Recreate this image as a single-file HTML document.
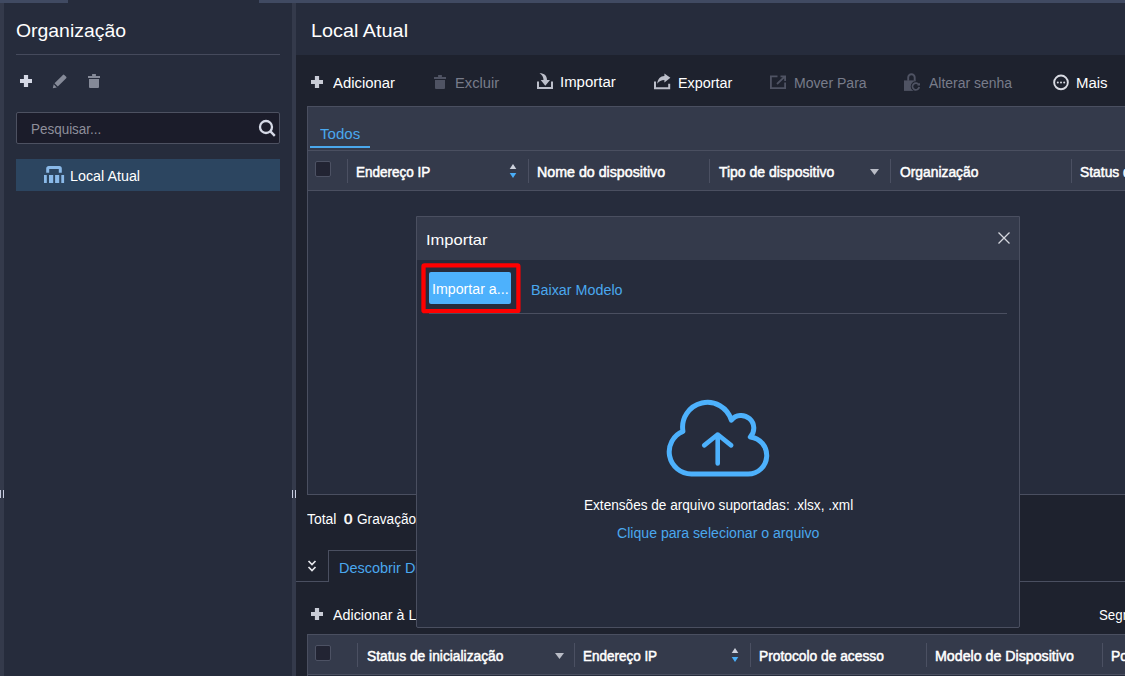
<!DOCTYPE html>
<html lang="pt-BR">
<head>
<meta charset="utf-8">
<title>Importar</title>
<style>
*{box-sizing:border-box;margin:0;padding:0}
html,body{width:1125px;height:676px;overflow:hidden;background:#262c3c}
body{font-family:"Liberation Sans",sans-serif;color:#fff;position:relative;font-size:14px}
.abs{position:absolute}
.t{position:absolute;white-space:nowrap;line-height:1;transform-origin:0 0}
.b{-webkit-text-stroke:0.5px currentColor}
svg{position:absolute;overflow:visible}
.sep{position:absolute;width:1px;height:24px;background:#4b5062}
.cb{position:absolute;width:16px;height:16px;background:#222433;border:1px solid #4d5264;border-radius:2px}
</style>
</head>
<body>

<!-- top strip / left strip -->
<div class="abs" style="left:0;top:0;width:68px;height:3px;background:#404a62"></div>
<div class="abs" style="left:259px;top:0;width:866px;height:3px;background:#404a62"></div>
<div class="abs" style="left:0;top:3px;width:4px;height:673px;background:#343a4b"></div>

<!-- ============ SIDEBAR ============ -->
<div class="abs" style="left:16px;top:54px;width:264px;height:1px;background:#454a5c"></div>

<!-- sidebar icons -->
<svg style="left:20px;top:75px" width="12" height="12" viewBox="0 0 12 12"><path d="M3.900 0h4.200v3.900H12v4.200H8.100V12H3.900V8.100H0V3.900h3.900z" fill="#d5d9e6"/></svg>
<svg style="left:53px;top:74px" width="14" height="14" viewBox="0 0 14 14"><path d="M1.500 9.300L9.900 0.900a1 1 0 0 1 1.400 0L13.200 2.800a1 1 0 0 1 0 1.400L4.800 12.600Z M0.700 10.300L3.800 13.400L-0.200 14.300Z" fill="#858a98"/></svg>
<svg style="left:88px;top:74px" width="12" height="14" viewBox="0 0 12 14"><path d="M4.100 0h3.800v2H12v2.100H0V2h4.100z M1 4.900h10V13a1 1 0 0 1-1 1H2a1 1 0 0 1-1-1z" fill="#858a98"/></svg>

<!-- search -->
<div class="abs" style="left:16px;top:112px;width:264px;height:32px;background:#1b1c2a;border:1px solid #4d5161;border-radius:2px"></div>
<svg style="left:258px;top:119px" width="18" height="18" viewBox="0 0 18 18"><circle cx="8" cy="8" r="6" fill="none" stroke="#d5d9e6" stroke-width="2.300"/><path d="M12.200 12.200l4.600 4.600" stroke="#d5d9e6" stroke-width="2.400"/></svg>

<!-- tree selected -->
<div class="abs" style="left:16px;top:159px;width:264px;height:32px;background:#2c4560"></div>
<svg style="left:44px;top:166px" width="20" height="17" viewBox="0 0 20 17"><path d="M3.700 6.700V2.600a1 1 0 0 1 1-1h10.600a1 1 0 0 1 1 1V6.700" fill="none" stroke="#8ab9e8" stroke-width="3"/><path d="M0 9h2.800v8H0z M5 9h4.200v8H5z M11.100 9h4.100v8h-4.100z M17.300 9h2.800v8h-2.800z" fill="#8ab9e8"/></svg>

<!-- splitter -->
<div class="abs" style="left:292px;top:3px;width:4px;height:673px;background:#343a4b"></div>
<div class="abs" style="left:0px;top:490px;width:1px;height:8px;background:#c8cde0"></div>
<div class="abs" style="left:3px;top:490px;width:1px;height:8px;background:#c8cde0"></div>
<div class="abs" style="left:292px;top:490px;width:1px;height:8px;background:#c8cde0"></div>
<div class="abs" style="left:295px;top:490px;width:1px;height:8px;background:#c8cde0"></div>

<!-- ============ MAIN ============ -->
<div class="abs" style="left:296px;top:55px;width:829px;height:621px;background:#1e222e"></div>

<!-- toolbar icons -->
<svg style="left:311px;top:76px" width="12" height="12" viewBox="0 0 12 12"><path d="M3.900 0h4.200v3.900H12v4.200H8.100V12H3.900V8.100H0V3.900h3.900z" fill="#c9ccd6"/></svg>
<svg style="left:434px;top:75px" width="12" height="14" viewBox="0 0 12 14"><path d="M4.100 0h3.800v2H12v2.100H0V2h4.100z M1 4.900h10V13a1 1 0 0 1-1 1H2a1 1 0 0 1-1-1z" fill="#4f5363"/></svg>
<svg style="left:537px;top:73px" width="16" height="16" viewBox="0 0 16 16"><path d="M1 8.500V15H15V8.500" fill="none" stroke="#bcbfca" stroke-width="2"/><path d="M2.500 0.300C7.500 0.300 10 2.800 10 7.100H13L8.300 12.800 3.700 7.100H6.500C6.500 4 5 1.800 2.500 0.300Z" fill="#bcbfca"/></svg>
<svg style="left:654px;top:74px" width="17" height="16" viewBox="0 0 17 16"><path d="M1 7.400V14.300H15.200V9.800" fill="none" stroke="#bcbfca" stroke-width="2"/><path d="M16.400 3.800L10.400 -0.500V2C6.500 2.200 3.500 4.800 3.300 9.800 5 7.300 7.300 6.200 10.400 6.100V8.400Z" fill="#bcbfca"/></svg>
<svg style="left:770px;top:75px" width="16" height="14" viewBox="0 0 16 14"><path d="M7.500 1.300H0.900V13.100H15.100V7.500" fill="none" stroke="#4f5363" stroke-width="1.800"/><path d="M10.500 1.300H15.100V6 M15 1.400L7 9" fill="none" stroke="#4f5363" stroke-width="1.800"/></svg>
<svg style="left:904px;top:73px" width="17" height="18" viewBox="0 0 17 18"><path d="M4.200 7.800V4.500a3.250 3.250 0 0 1 6.500 0V7.800" fill="none" stroke="#4f5363" stroke-width="1.900"/><path d="M0 7.400h11.800v10.500H0z" fill="#4f5363"/><circle cx="11.800" cy="13.400" r="5.100" fill="#1e222e"/><path d="M14.900 12A3.400 3.400 0 1 0 15.200 14" fill="none" stroke="#4f5363" stroke-width="1.700"/><path d="M13.100 12.600h2.900v-2.900z" fill="#4f5363"/></svg>
<svg style="left:1053px;top:74px" width="16" height="16" viewBox="0 0 16 16"><circle cx="8" cy="8.400" r="6.850" fill="none" stroke="#d9dbe3" stroke-width="1.900"/><circle cx="4.800" cy="8.400" r="1" fill="#d9dbe3"/><circle cx="8" cy="8.400" r="1" fill="#d9dbe3"/><circle cx="11.200" cy="8.400" r="1" fill="#d9dbe3"/></svg>

<!-- table panel -->
<div class="abs" style="left:307px;top:106px;width:830px;height:389px;background:#262c3c;border:1px solid #4a4f60"></div>
<div class="abs" style="left:308px;top:107px;width:817px;height:83px;background:#343a4b"></div>
<div class="abs" style="left:308px;top:150px;width:817px;height:1px;background:#4a4f60"></div>
<div class="abs" style="left:308px;top:190px;width:817px;height:1px;background:#4a4f60"></div>
<div class="abs" style="left:310px;top:146px;width:60px;height:2px;background:#4aa8ee"></div>

<div class="cb" style="left:315px;top:161px"></div>
<div class="sep" style="left:347px;top:159px"></div>
<svg style="left:509px;top:164px" width="8" height="14" viewBox="0 0 8 14"><path d="M4 0L7.300 5H0.700z" fill="#cdd1dc"/><path d="M4 14L7.300 9H0.700z" fill="#4aaef8"/></svg>
<div class="sep" style="left:528px;top:159px"></div>
<div class="sep" style="left:709px;top:159px"></div>
<svg style="left:870px;top:169px" width="9" height="6" viewBox="0 0 9 6"><path d="M0 0h9L4.500 6z" fill="#b9bcc6"/></svg>
<div class="sep" style="left:890px;top:159px"></div>
<div class="sep" style="left:1071px;top:159px"></div>

<!-- discover tabs -->
<div class="abs" style="left:296px;top:581px;width:33px;height:1px;background:#4a4f60"></div>
<div class="abs" style="left:490px;top:581px;width:635px;height:1px;background:#4a4f60"></div>
<div class="abs" style="left:328px;top:550px;width:163px;height:32px;border:1px solid #4a4f60;border-bottom:none"></div>
<svg style="left:308px;top:560px" width="8" height="12" viewBox="0 0 8 12"><path d="M0.500 1l3.500 3.500L7.500 1 M0.500 7l3.500 3.500L7.500 7" fill="none" stroke="#e6e7ec" stroke-width="1.700"/></svg>

<svg style="left:311px;top:608px" width="12" height="12" viewBox="0 0 12 12"><path d="M3.900 0h4.200v3.900H12v4.200H8.100V12H3.900V8.100H0V3.900h3.900z" fill="#c9ccd6"/></svg>

<!-- lower table header -->
<div class="abs" style="left:307px;top:634px;width:830px;height:50px;background:#343a4b;border:1px solid #4a4f60"></div>
<div class="abs" style="left:308px;top:674px;width:817px;height:1px;background:#4a4f60"></div>
<div class="abs" style="left:308px;top:675px;width:817px;height:1px;background:#262c3c"></div>
<div class="cb" style="left:315px;top:645px"></div>
<div class="sep" style="left:357px;top:643px"></div>
<svg style="left:555px;top:653px" width="9" height="6" viewBox="0 0 9 6"><path d="M0 0h9L4.500 6z" fill="#b9bcc6"/></svg>
<div class="sep" style="left:574px;top:643px"></div>
<svg style="left:731px;top:648px" width="8" height="14" viewBox="0 0 8 14"><path d="M4 0L7.300 5H0.700z" fill="#cdd1dc"/><path d="M4 14L7.300 9H0.700z" fill="#4aaef8"/></svg>
<div class="sep" style="left:750px;top:643px"></div>
<div class="sep" style="left:926px;top:643px"></div>
<div class="sep" style="left:1102px;top:643px"></div>

<div class="t" style="left:15.58px;top:21px;font-size:19px;color:#ffffff;transform:scaleX(1.0208);">Organização</div>
<div class="t" style="left:30.64px;top:122px;font-size:14px;color:#8e8f9b;transform:scaleX(0.9606);">Pesquisar...</div>
<div class="t" style="left:69.58px;top:169px;font-size:14px;color:#ffffff;transform:scaleX(1.0224);">Local Atual</div>
<div class="t" style="left:310.66px;top:21px;font-size:19px;color:#ffffff;transform:scaleX(1.0440);">Local Atual</div>
<div class="t" style="left:333.20px;top:76px;font-size:14px;color:#ffffff;transform:scaleX(1.0621);">Adicionar</div>
<div class="t" style="left:455.35px;top:76px;font-size:14px;color:#787c8a;transform:scaleX(1.0512);">Excluir</div>
<div class="t" style="left:559.63px;top:75px;font-size:14px;color:#ffffff;transform:scaleX(1.0686);">Importar</div>
<div class="t" style="left:677.77px;top:76px;font-size:14px;color:#ffffff;transform:scaleX(1.0269);">Exportar</div>
<div class="t" style="left:793.80px;top:76px;font-size:14px;color:#787c8a;transform:scaleX(1.0042);">Mover Para</div>
<div class="t" style="left:928.50px;top:76px;font-size:14px;color:#787c8a;transform:scaleX(0.9964);">Alterar senha</div>
<div class="t" style="left:1076.43px;top:76px;font-size:14px;color:#ffffff;transform:scaleX(1.0679);">Mais</div>
<div class="t" style="left:320.20px;top:126px;font-size:15px;color:#4aa8ee;transform:scaleX(1.0050);">Todos</div>
<div class="t b" style="left:356.14px;top:165px;font-size:14px;color:#ffffff;transform:scaleX(0.9645);">Endereço IP</div>
<div class="t b" style="left:537.18px;top:165px;font-size:14px;color:#ffffff;transform:scaleX(1.0160);">Nome do dispositivo</div>
<div class="t b" style="left:718.90px;top:165px;font-size:14px;color:#ffffff;transform:scaleX(1.0000);">Tipo de dispositivo</div>
<div class="t b" style="left:899.70px;top:165px;font-size:14px;color:#ffffff;transform:scaleX(0.9873);">Organização</div>
<div class="t b" style="left:1079.70px;top:165px;font-size:14px;color:#ffffff;transform:scaleX(0.9892);">Status de dispositivo</div>
<div class="t" style="left:307.20px;top:512px;font-size:14px;color:#ffffff;transform:scaleX(0.9931);">Total</div>
<div class="t b" style="left:344.00px;top:512px;font-size:14px;color:#ffffff;transform:scaleX(1.0800);">0</div>
<div class="t" style="left:356.52px;top:512px;font-size:14px;color:#ffffff;transform:scaleX(0.9750);">Gravação(ões)</div>
<div class="t" style="left:338.97px;top:561px;font-size:14px;color:#4aa8ee;transform:scaleX(1.0330);">Descobrir Dispositivos</div>
<div class="t" style="left:333.00px;top:608px;font-size:14px;color:#ffffff;transform:scaleX(1.0200);">Adicionar à Lista</div>
<div class="t" style="left:1099.45px;top:608px;font-size:14px;color:#ffffff;transform:scaleX(0.9500);">Segmento de rede</div>
<div class="t b" style="left:366.60px;top:649px;font-size:14px;color:#ffffff;transform:scaleX(0.9849);">Status de inicialização</div>
<div class="t b" style="left:583.24px;top:649px;font-size:14px;color:#ffffff;transform:scaleX(0.9618);">Endereço IP</div>
<div class="t b" style="left:759.02px;top:649px;font-size:14px;color:#ffffff;transform:scaleX(0.9841);">Protocolo de acesso</div>
<div class="t b" style="left:934.99px;top:649px;font-size:14px;color:#ffffff;transform:scaleX(1.0147);">Modelo de Dispositivo</div>
<div class="t b" style="left:1111.41px;top:649px;font-size:14px;color:#ffffff;transform:scaleX(0.9892);">Porta</div>


<!-- ============ DIALOG ============ -->
<div class="abs" style="left:416px;top:216px;width:604px;height:412px;background:#262c3c;border:1px solid #4a4f60;border-radius:0 0 2px 2px"></div>
<div class="abs" style="left:417px;top:217px;width:602px;height:43px;background:#343a4b"></div>
<svg style="left:998px;top:232px" width="12" height="12" viewBox="0 0 12 12"><path d="M0.500 0.500l11 11 M11.500 0.500l-11 11" stroke="#d5d7de" stroke-width="1.300" fill="none"/></svg>

<svg style="left:0;top:0" width="1125" height="676"><rect x="423.500" y="265.450" width="94.900" height="45.700" rx="1" fill="none" stroke="#ff0000" stroke-width="4.300"/></svg>
<div class="abs" style="left:429px;top:272px;width:82px;height:32px;background:#4db1fc;border-radius:2px"></div>
<div class="abs" style="left:429px;top:313px;width:578px;height:1px;background:#4a4f60"></div>

<!-- cloud -->
<svg style="left:660px;top:395px" width="116" height="86" viewBox="0 0 116 86">
<path d="M31.30 78.90 A22.10 22.10 0 0 1 22.93 36.35 A24.90 24.90 0 0 1 71.33 25.08 A12.70 12.70 0 1 1 90.32 41.93 A18.60 18.60 0 0 1 88.10 79.00 Z" fill="none" stroke="#4db1fc" stroke-width="5" stroke-linejoin="round"/>
<path d="M57.700 68.400V39.500 M44.200 50.400L57.700 39.500l13.500 10.900" fill="none" stroke="#4db1fc" stroke-width="4.600" stroke-linecap="round" stroke-linejoin="round"/>
</svg>

<div class="t" style="left:426.10px;top:232px;font-size:15px;color:#ffffff;transform:scaleX(1.1018);">Importar</div>
<div class="t" style="left:432.48px;top:282px;font-size:14px;color:#ffffff;transform:scaleX(1.0151);">Importar a...</div>
<div class="t" style="left:530.58px;top:283px;font-size:14px;color:#4aa8ee;transform:scaleX(1.0227);">Baixar Modelo</div>
<div class="t" style="left:583.73px;top:498px;font-size:14px;color:#ffffff;transform:scaleX(0.9716);">Extensões de arquivo suportadas: .xlsx, .xml</div>
<div class="t" style="left:616.99px;top:526px;font-size:14px;color:#4aa8ee;transform:scaleX(1.0075);">Clique para selecionar o arquivo</div>


</body>
</html>
